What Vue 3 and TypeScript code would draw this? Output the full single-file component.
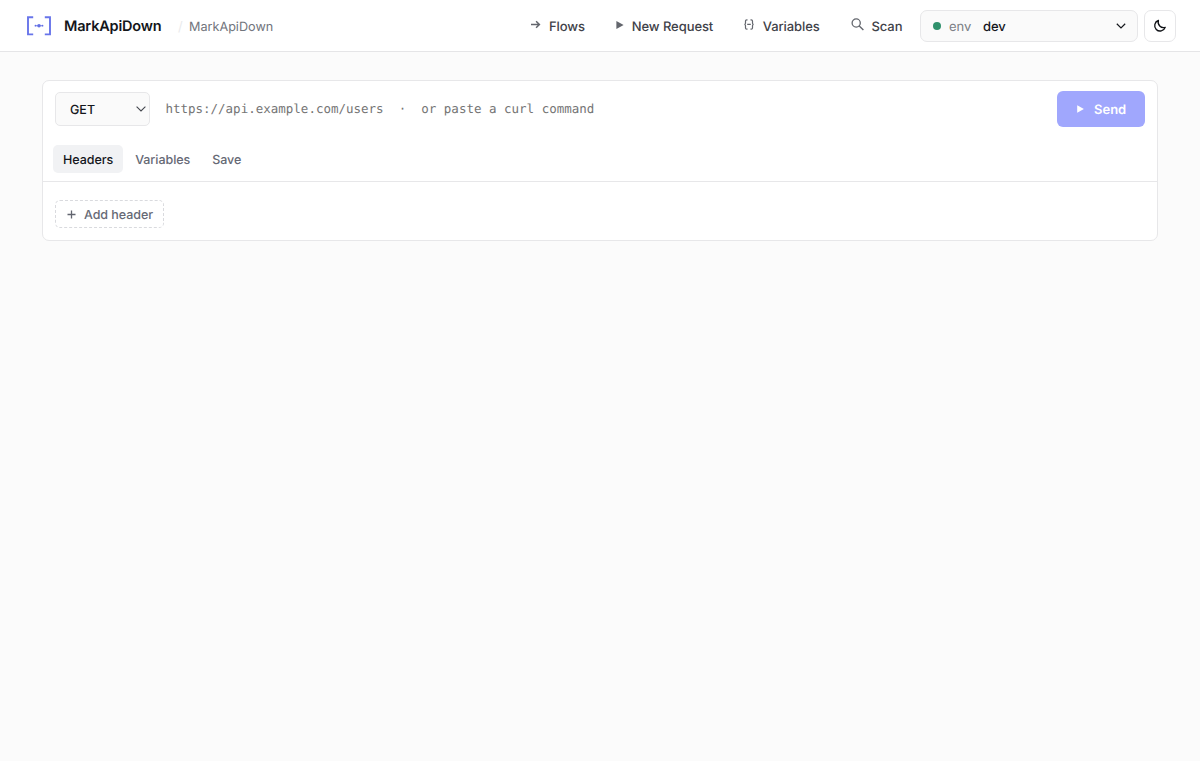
<script setup lang="ts">
import { ref } from 'vue'

type Icon = 'arrow' | 'play' | 'braces' | 'search'
interface NavItem { label: string; icon: Icon }

const navItems: NavItem[] = [
  { label: 'Flows', icon: 'arrow' },
  { label: 'New Request', icon: 'play' },
  { label: 'Variables', icon: 'braces' },
  { label: 'Scan', icon: 'search' },
]
const tabs: string[] = ['Headers', 'Variables', 'Save']
const activeTab = ref<string>('Headers')
const url = ref<string>('')
const placeholder = 'https://api.example.com/users \u00a0·\u00a0 or paste a curl command'
</script>

<template>
  <div class="page">
    <header class="topbar">
      <svg class="logo" width="26" height="20" viewBox="0 0 26 20" fill="none" stroke="#6875ea" stroke-width="1.9">
        <path d="M7.2 1.2H2v17.2h5.2M18.8 1.2H24v17.2h-5.2" />
        <path d="M9 9.7h8" stroke-width=".8" />
        <circle cx="13" cy="9.7" r="1.8" fill="#6370e4" stroke="none" />
        <circle cx="9.5" cy="9.7" r=".9" fill="#6370e4" stroke="none" />
        <circle cx="16.5" cy="9.7" r=".9" fill="#6370e4" stroke="none" />
      </svg>
      <span class="brand">MarkApiDown</span>
      <span class="slash">/</span>
      <span class="crumb">MarkApiDown</span>

      <nav class="nav">
        <a v-for="item in navItems" :key="item.label" class="nav-item" :class="item.icon">
          <svg v-if="item.icon === 'arrow'" class="nav-icon" width="11" height="9" viewBox="0 0 11 9" fill="none" stroke="currentColor" stroke-width="1.5">
            <path d="M1 4.5h8.4M6.1 1.3l3.3 3.2-3.3 3.2" />
          </svg>
          <svg v-else-if="item.icon === 'play'" class="nav-icon" width="8" height="8" viewBox="0 0 8 8" fill="currentColor">
            <path d="M.4.1 7.6 4 .4 7.9z" />
          </svg>
          <svg v-else-if="item.icon === 'braces'" class="nav-icon" width="10" height="11" viewBox="0 0 10 11" fill="none" stroke="currentColor" stroke-width="1.2">
            <path d="M3.5.8H2.8Q1.5.8 1.5 2v2.2L.9 5.4l.6 1.2V9q0 1.2 1.3 1.2h.7M6.5.8h.7Q8.5.8 8.5 2v2.2l.6 1.2-.6 1.2V9q0 1.2-1.3 1.2h-.7M3.2 5.4h3.6" />
          </svg>
          <svg v-else class="nav-icon" width="13" height="13" viewBox="0 0 13 13" fill="none" stroke="currentColor" stroke-width="1.3">
            <circle cx="5.2" cy="5" r="4.1" />
            <path d="m8 7.8 4.4 4.2" stroke-width="1.4" />
          </svg>
          <span>{{ item.label }}</span>
        </a>
      </nav>

      <button class="env">
        <span class="dot"></span>
        <span class="env-label">env</span>
        <span class="env-value">dev</span>
        <svg class="chevron" width="10" height="6" viewBox="0 0 10 6" fill="none" stroke="#15171c" stroke-width="1.2">
          <path d="m.8.8 4.2 4.1L9.2.8" />
        </svg>
      </button>
      <button class="theme" aria-label="Toggle theme">
        <svg width="14" height="14" viewBox="0 0 14 14" fill="none" stroke="#101216" stroke-width="1.35" stroke-linejoin="round">
          <path d="M5.4 1.5A5.4 5.4 0 1 0 12.2 8.4 5.5 5.5 0 0 1 5.4 1.5z" />
        </svg>
      </button>
    </header>

    <main class="card">
      <div class="request">
        <button class="method">
          <span>GET</span>
          <svg width="10" height="6" viewBox="0 0 10 6" fill="none" stroke="#44474e" stroke-width="1.1">
            <path d="m.6.6 4.4 4.3L9.4.6" />
          </svg>
        </button>
        <input v-model="url" class="url" :placeholder="placeholder" />
        <button class="send">
          <svg width="7" height="8" viewBox="0 0 7 8" fill="#fff"><path d="M.2.3 6.9 4 .2 7.7z" /></svg>
          <span>Send</span>
        </button>
      </div>
      <div class="tabs">
        <button v-for="tab in tabs" :key="tab" class="tab" :class="{ active: tab === activeTab }" @click="activeTab = tab">{{ tab }}</button>
      </div>
      <div class="panel">
        <button class="add">
          <svg width="9" height="9" viewBox="0 0 9 9" stroke="#62656f" stroke-width="1.3"><path d="M.5 4.5h8M4.5.5v8" /></svg>
          <span>Add header</span>
        </button>
      </div>
    </main>
  </div>
</template>

<style>
body { margin: 0; background: #fbfbfb; }
</style>

<style scoped>
.page { min-height: 761px; background: #fbfbfb; font-family: Inter, "Liberation Sans", sans-serif; font-size: 13px; color: #15171c; text-rendering: geometricPrecision; }
.page * { box-sizing: border-box; }
svg { display: block; flex: none; }
button { font: inherit; color: inherit; text-rendering: inherit; margin: 0; display: flex; align-items: center; white-space: nowrap; }
.topbar { height: 52px; box-sizing: border-box; display: flex; align-items: center; padding: 0 24px 0 26px; background: #fff; border-bottom: 1px solid #e5e5e7; }
.logo { margin-right: 12px; }
.brand { width: 98px; padding-top: 2px; font-size: 14.5px; font-weight: 600; letter-spacing: -0.18px; color: #14161a; }
.slash { width: 5px; margin-left: 16px; padding-top: 2px; color: #e9eaec; }
.crumb { margin-left: 6px; padding-top: 3px; font-size: 12.65px; color: #71747c; }
.nav { margin-left: auto; display: flex; align-items: center; }
.nav-item { display: flex; align-items: center; padding-top: 2px; color: #3f4249; font-weight: 500; letter-spacing: -0.08px; }
.nav-item + .nav-item { margin-left: 31px; }
.nav-icon { margin-right: 7.8px; margin-top: -4px; color: #63666d; }
.braces .nav-icon { margin-right: 8.5px; }
.env { width: 218px; height: 32px; margin-left: 17.6px; padding: 0 11px 0 12px; border: 1px solid #e7e7e9; border-radius: 7px; background: #fafafa; }
.dot { width: 8px; height: 8px; border-radius: 50%; background: #30916c; margin-right: 8px; }
.env-label, .env-value { padding-top: 2px; }
.env-label { color: #7b7e85; }
.env-value { margin-left: 11.5px; font-weight: 500; letter-spacing: -0.05px; }
.chevron { margin-left: auto; }
.theme { width: 32px; height: 32px; margin-left: 6px; padding: 0; justify-content: center; border: 1px solid #e7e7e9; border-radius: 7px; background: #fff; }
.card { margin: 28px 42px 0; height: 161px; background: #fff; border: 1px solid #e7e7e9; border-radius: 7px; }
.request { display: flex; align-items: center; height: 56px; padding: 0 12px; }
.method { width: 95px; height: 34px; padding: 0 3px 0 14px; justify-content: space-between; border: 1px solid #e7e7e9; border-radius: 5px; background: #fafafa; font-weight: 500; font-size: 12.5px; }
.method span, .add span { padding-top: 2px; }
.url { flex: 1; min-width: 0; border: 0; outline: 0; background: none; padding: 0 0 1px 15.4px; font: 12.5px "DejaVu Sans Mono", monospace; text-rendering: inherit; }
.url::placeholder { color: #757575; opacity: 1; }
.send { width: 88.5px; height: 36px; padding: 0 0 0 20.5px; gap: 10px; border: 0; border-radius: 6px; background: #a0a7fd; color: #fff; font-weight: 600; }
.send span { padding-top: 1px; }
.tabs { display: flex; gap: 2px; height: 45px; padding: 8px 10px; border-bottom: 1px solid #e7e7e9; }
.tab { height: 28px; padding: 2px 10px 0; border: 0; border-radius: 5px; background: none; color: #666975; font-size: 12.5px; font-weight: 500; letter-spacing: -0.05px; }
.tab.active { background: #f1f2f4; color: #15171c; }
.panel { padding: 18px 12px 12px; }
.add { width: 109px; height: 28px; padding: 0 0 0 11px; gap: 8px; border: 1px dashed #d9dade; border-radius: 5px; background: #fff; color: #666975; font-size: 12.5px; font-weight: 500; letter-spacing: -0.06px; }
</style>
